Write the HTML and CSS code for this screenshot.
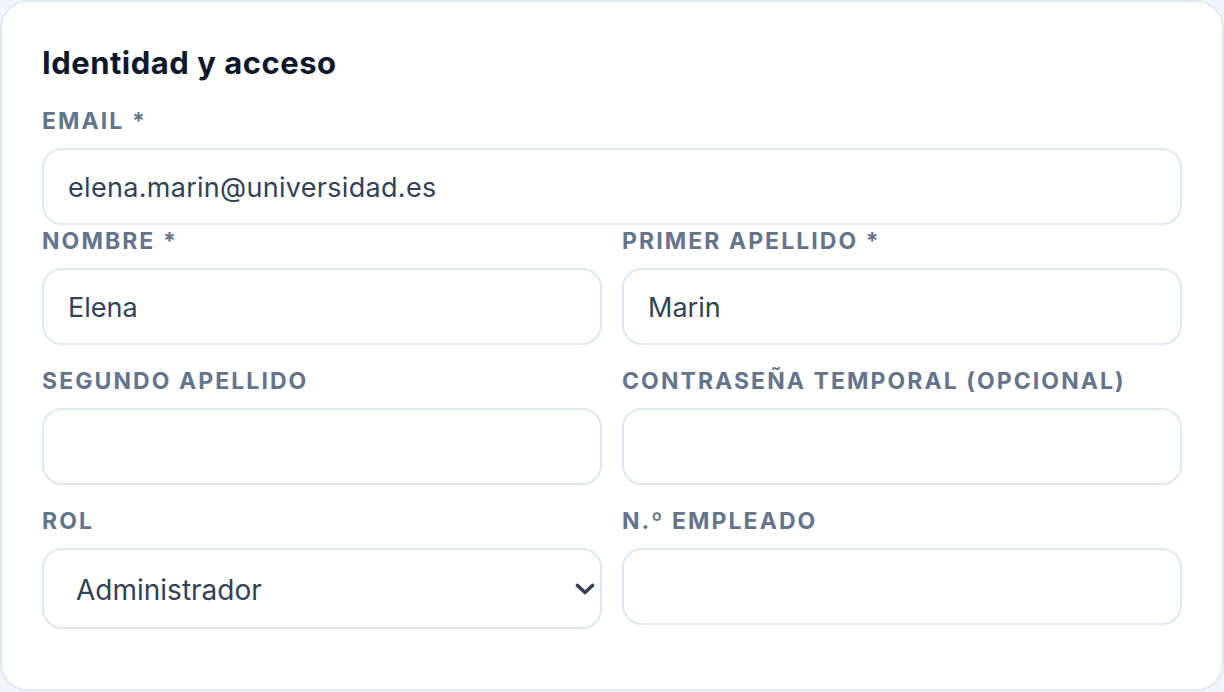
FILE: index.html
```html
<!DOCTYPE html>
<html lang="es">
<head>
<meta charset="utf-8">
<title>Identidad y acceso</title>
<link rel="stylesheet" href="styles.css">
</head>
<body>
<section class="card">
  <h2 class="title">Identidad y acceso</h2>
  <div class="field field-email">
    <label class="label">Email *</label>
    <input class="input input-email" type="email" value="elena.marin@universidad.es">
  </div>
  <div class="grid">
    <div class="field">
      <label class="label">Nombre *</label>
      <input class="input" type="text" value="Elena">
    </div>
    <div class="field">
      <label class="label">Primer apellido *</label>
      <input class="input" type="text" value="Marin">
    </div>
    <div class="field">
      <label class="label">Segundo apellido</label>
      <input class="input" type="text" value="">
    </div>
    <div class="field">
      <label class="label">Contraseña temporal (opcional)</label>
      <input class="input" type="text" value="">
    </div>
    <div class="field">
      <label class="label">Rol</label>
      <div class="select-wrap">
        <select class="select">
          <option>Administrador</option>
        </select>
        <svg class="chevron" width="20" height="12" viewBox="0 0 20 12" aria-hidden="true">
          <path d="M2.5 2.5 L10 9.5 L17.5 2.5" fill="none" stroke="#334155" stroke-width="3.6" stroke-linecap="round" stroke-linejoin="round"/>
        </svg>
      </div>
    </div>
    <div class="field">
      <label class="label">N.º empleado</label>
      <input class="input" type="text" value="">
    </div>
  </div>
</section>
</body>
</html>
```
FILE: styles.css
```css
* { box-sizing: border-box; }
html, body { margin: 0; padding: 0; }
body {
  background: #f1f5f9;
  font-family: Inter, "Noto Sans", sans-serif;
}
.card {
  width: 1224px;
  height: 691px;
  background: #ffffff;
  border: 2px solid #e2e8f0;
  border-radius: 28px;
  padding: 43px 40px 0 40px;
}
.title {
  margin: 0 0 26px 0;
  font-size: 31px;
  line-height: 36px;
  font-weight: 700;
  letter-spacing: 0.5px;
  color: #0f172a;
}
.field {
  display: flex;
  flex-direction: column;
}
.field-email { margin-bottom: 2px; }
.label {
  display: block;
  font-size: 23px;
  line-height: 28px;
  font-weight: 700;
  letter-spacing: 0.09em;
  text-transform: uppercase;
  color: #64748b;
  margin-bottom: 13px;
}
.input {
  display: block;
  width: 100%;
  height: 77px;
  border: 2px solid #e2e8f0;
  border-radius: 20px;
  background: #ffffff;
  padding: 2px 24px 0 24px;
  font-family: Inter, "Noto Sans", sans-serif;
  font-size: 27px;
  color: #334155;
  outline: none;
}
.input-email { letter-spacing: 0.3px; }
.grid {
  display: grid;
  grid-template-columns: 1fr 1fr;
  column-gap: 20px;
  row-gap: 22px;
}
.select-wrap { position: relative; }
.select {
  display: block;
  width: 100%;
  height: 81px;
  appearance: none;
  -webkit-appearance: none;
  border: 2px solid #e2e8f0;
  border-radius: 20px;
  background: #ffffff;
  padding: 2px 40px 0 32px;
  font-family: Inter, "Noto Sans", sans-serif;
  font-size: 28px;
  color: #334155;
  outline: none;
}
.chevron {
  position: absolute;
  right: 7px;
  top: 35px;
  pointer-events: none;
}
```
